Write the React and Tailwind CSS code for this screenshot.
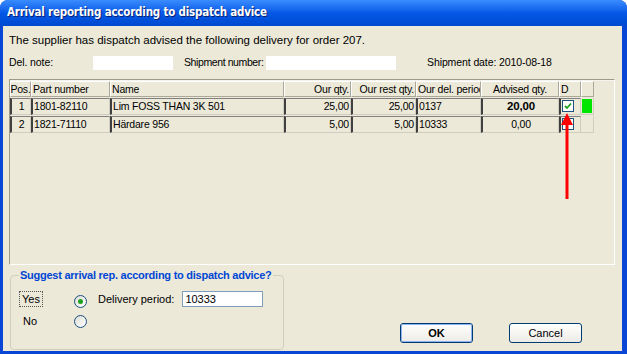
import React from "react";

const F = { fontFamily: '"Liberation Sans", Arial, sans-serif' };

const cols = [
  { w: 21, h: "Pos.", align: "text-center" },
  { w: 79, h: "Part number", align: "text-left" },
  { w: 174, h: "Name", align: "text-left" },
  { w: 67, h: "Our qty.", align: "text-right" },
  { w: 65, h: "Our rest qty.", align: "text-right" },
  { w: 65, h: "Our del. period", align: "text-left" },
  { w: 78, h: "Advised qty.", align: "text-center" },
  { w: 22, h: "D", align: "text-left" },
  { w: 13, h: "", align: "text-left" },
];

const rows = [
  ["1", "1801-82110", "Lim FOSS THAN 3K 501", "25,00", "25,00", "0137", "20,00", true, true],
  ["2", "1821-71110", "Härdare 956", "5,00", "5,00", "10333", "0,00", false, false],
];

function Check({ checked }) {
  return (
    <div className="w-[12px] h-[12px] bg-white border border-[#1c5180] flex items-center justify-center">
      {checked && (
        <svg width="8" height="8" viewBox="0 0 8 8">
          <path d="M1 4 L3 6 L7 1.5" stroke="#21a121" strokeWidth="1.8" fill="none" />
        </svg>
      )}
    </div>
  );
}

function Radio({ on }) {
  return (
    <div className="w-[13px] h-[13px] rounded-full border border-[#1c5180] bg-gradient-to-br from-[#dcdcd5] to-white flex items-center justify-center">
      {on && <div className="w-[5px] h-[5px] rounded-full bg-[#21a121]" />}
    </div>
  );
}

function Btn({ children, def }) {
  return (
    <div className="w-[73px] h-[20px] rounded-[3px] border border-[#003c74] bg-gradient-to-b from-white to-[#ecebe6] flex items-center justify-center">
      <div className={`w-full h-full rounded-[2px] flex items-center justify-center text-[11px] text-black ${def ? "border border-[#8eb2f0] font-bold" : ""}`}>
        {children}
      </div>
    </div>
  );
}

export default function App() {
  return (
    <div className="w-[627px] h-[354px] bg-[#0a46d6] rounded-t-[8px] flex flex-col overflow-hidden text-[11px] text-black whitespace-nowrap" style={F}>
      <div className="h-[26px] flex items-center pl-[7px] bg-gradient-to-b from-[#3a8cff] via-[#0458e6] to-[#0049d0]">
        <span className="text-white font-bold text-[11.5px] tracking-[-0.2px]" style={{ fontFamily: '"DejaVu Sans Condensed", "DejaVu Sans", sans-serif', textShadow: "1px 1px 0 #0a1e70" }}>
          Arrival reporting according to dispatch advice
        </span>
      </div>
      <div className="flex-1 ml-[3px] mr-[5px] mb-[3px] bg-[#ece9d8] relative flex flex-col">
        <div className="pl-[6px] pt-[8px] h-[21px] text-[11.5px] leading-[13px]">
          The supplier has dispatch advised the following delivery for order 207.
        </div>
        <div className="flex items-center h-[15px] mt-[8px] pl-[6px] text-[10.5px] tracking-[-0.1px]">
          <span className="w-[84px] shrink-0">Del. note:</span>
          <div className="w-[80px] h-[14px] bg-white shrink-0" />
          <span className="ml-[11px] w-[82px] shrink-0 tracking-[-0.4px]">Shipment number:</span>
          <div className="w-[130px] h-[14px] bg-white shrink-0" />
          <span className="ml-[31px]">Shipment date: 2010-08-18</span>
        </div>
        <div className="mt-[9px] ml-[6px] w-[606px] h-[186px] border-l border-t border-[#9d9a8a] border-r border-r-white border-b border-b-white relative text-[10.5px] tracking-[-0.2px]">
          <div className="h-[1px] bg-[#f4f3ee]" />
          <div className="flex h-[16px]">
            {cols.map((c, i) => (
              <div
                key={i}
                style={{ width: c.w }}
                className={`h-full border-t border-l border-white border-r border-r-[#aca899] border-b border-b-[#aca899] leading-[14px] overflow-hidden flex ${c.h === "Pos." || c.h === "Advised qty." ? "justify-center" : c.align === "text-right" ? "justify-end pr-[1px]" : "justify-start pl-[1px]"}`}
              >
                <span className="shrink-0">{c.h}</span>
              </div>
            ))}
          </div>
          {rows.map((r, ri) => (
            <div key={ri} className="flex h-[17px] mt-[1px]">
              {cols.map((c, i) => {
                const base = "h-full leading-[15px] overflow-hidden";
                if (i === 7) {
                  return (
                    <div key={i} style={{ width: c.w }} className={`${base} border-l-2 border-l-[#404040] border-t border-t-[#808080] border-r border-r-[#cfccc0] border-b border-b-[#cfccc0] flex items-start pt-[1px] pl-[1px]`}>
                      <Check checked={r[7]} />
                    </div>
                  );
                }
                if (i === 8) {
                  return (
                    <div key={i} style={{ width: c.w }} className={`${base} border-r border-b border-[#cfccc0] p-[1px]`}>
                      {r[8] && <div className="w-full h-full bg-[#00e600]" />}
                    </div>
                  );
                }
                return (
                  <div
                    key={i}
                    style={{ width: c.w }}
                    className={`${base} ${c.align} ${i === 6 && ri === 0 ? "font-bold text-[11.5px]" : ""} border-l-2 border-l-[#404040] border-t border-t-[#808080] border-r border-r-[#cfccc0] border-b border-b-[#cfccc0] ${c.align === "text-right" ? "pr-[1px]" : "pl-[1px]"}`}
                  >
                    {r[i]}
                  </div>
                );
              })}
            </div>
          ))}
          <svg className="absolute left-[550px] top-[33px]" width="14" height="88" viewBox="0 0 14 88">
            <polygon points="7,0 1,12 13,12" fill="#ff0000" />
            <rect x="5.5" y="10" width="3" height="76" fill="#ff0000" />
          </svg>
        </div>
        <div className="mt-[10px] ml-[7px] w-[274px] h-[75px] border border-[#d0d0bf] rounded-[4px] relative">
          <div className="absolute left-[8px] top-[-8px] bg-[#ece9d8] px-[1px] text-[#0046d5] font-bold text-[11px] tracking-[-0.25px] leading-[14px]">
            Suggest arrival rep. according to dispatch advice?
          </div>
          <div className="flex items-center mt-[14px] ml-[8px] h-[18px]">
            <span className="border border-dotted border-[#555] px-[2px] leading-[14px]">Yes</span>
            <div className="ml-[31px] mt-[5px]"><Radio on /></div>
            <span className="ml-[11px]">Delivery period:</span>
            <div className="ml-[8px] w-[81px] h-[16px] bg-white border border-[#7f9db9] pl-[2px] leading-[14px]">10333</div>
          </div>
          <div className="flex items-center mt-[5px] ml-[12px] h-[16px]">
            <span>No</span>
            <div className="ml-[37px]"><Radio /></div>
          </div>
        </div>
        <div className="absolute left-[397px] top-[297px] flex gap-[36px]">
          <Btn def>OK</Btn>
          <Btn>Cancel</Btn>
        </div>
      </div>
    </div>
  );
}
